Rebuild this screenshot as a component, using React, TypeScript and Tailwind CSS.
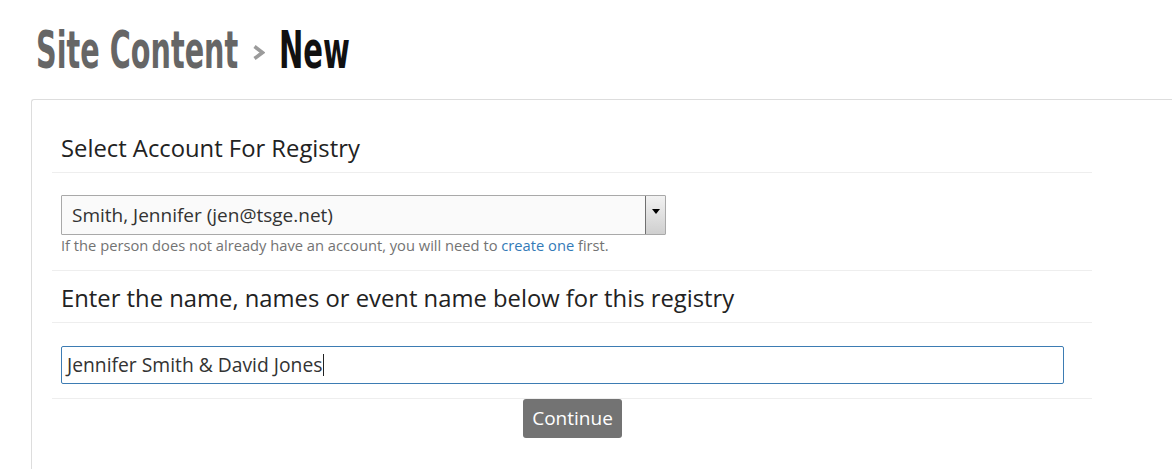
import React from "react";

const titleFont = { fontFamily: '"DejaVu Sans", "Liberation Sans", sans-serif' };

export default function App() {
  return (
    <div className="w-[1172px] h-[469px] overflow-hidden bg-white" style={{ fontFamily: '"Open Sans", "Liberation Sans", sans-serif' }}>
      <div className="h-[99px] pl-[36px] pt-[24px]">
        <h1 className="flex items-center h-[52px] text-[52px] leading-none font-bold whitespace-nowrap" style={titleFont}>
          <span className="block shrink-0 w-[202px] h-[52px]">
            <span className="inline-block origin-left scale-x-[0.552] text-[#666666]">Site Content</span>
          </span>
          <svg width="13" height="15" viewBox="0 0 13 15" className="shrink-0 ml-[14px] mt-[5px]">
            <path d="M2.5 1.5 L10.5 7.5 L2.5 13.5" fill="none" stroke="#9b9b9b" strokeWidth="3.6" strokeLinejoin="miter" />
          </svg>
          <span className="block shrink-0 ml-[14px] w-[69px] h-[52px]">
            <span className="inline-block origin-left scale-x-[0.56] text-[#111111]">New</span>
          </span>
        </h1>
      </div>
      <div className="ml-[31px] border-l border-t border-[#dddddd] rounded-tl-[3px] pl-[20px] pt-[24px] h-[370px]">
        <div className="w-[1040px]">
          <div className="border-b border-[#eeeeee] pt-[9px] pb-[9px] px-[9px]">
            <h2 className="text-[23.8px] leading-[30px] text-[#222222]">Select Account For Registry</h2>
          </div>
          <div className="px-[9px] pt-[22px] pb-[15px] border-b border-[#eeeeee]">
            <div className="flex w-[605px] h-[40px] border border-[#a9a9a9] bg-[#fafafa] rounded-[1px]">
              <div className="flex-1 flex items-center pl-[10px] text-[19px] text-[#333333]">Smith, Jennifer (jen@tsge.net)</div>
              <div className="w-[20px] h-full border-l border-[#707070] bg-gradient-to-b from-[#f2f2f2] to-[#cfcfcf] flex justify-center pt-[13px]">
                <svg width="8" height="5" viewBox="0 0 8 5">
                  <path d="M0 0 L8 0 L4 5 Z" fill="#000" />
                </svg>
              </div>
            </div>
            <p className="text-[14.7px] leading-[20px] text-[#737373]">
              If the person does not already have an account, you will need to <span className="text-[#337ab7]">create one</span> first.
            </p>
          </div>
          <div className="border-b border-[#eeeeee] pt-[12px] pb-[9px] px-[9px]">
            <h2 className="text-[23.8px] leading-[30px] text-[#222222]">Enter the name, names or event name below for this registry</h2>
          </div>
          <div className="px-[9px] pt-[23px] pb-[14px] border-b border-[#eeeeee]">
            <div className="flex items-center w-[1003px] h-[38px] border border-[#3d7cb3] rounded-[2px] pl-[5px] text-[19.3px] text-[#333333]">
              <span>Jennifer Smith &amp; David Jones</span>
              <span className="inline-block w-[1px] h-[22px] bg-[#222222] ml-[1px]" />
            </div>
          </div>
          <div className="flex justify-center">
            <button className="w-[99px] h-[39px] bg-[#737373] text-white text-[19px] rounded-[3px] ml-[1px]">Continue</button>
          </div>
        </div>
      </div>
    </div>
  );
}
